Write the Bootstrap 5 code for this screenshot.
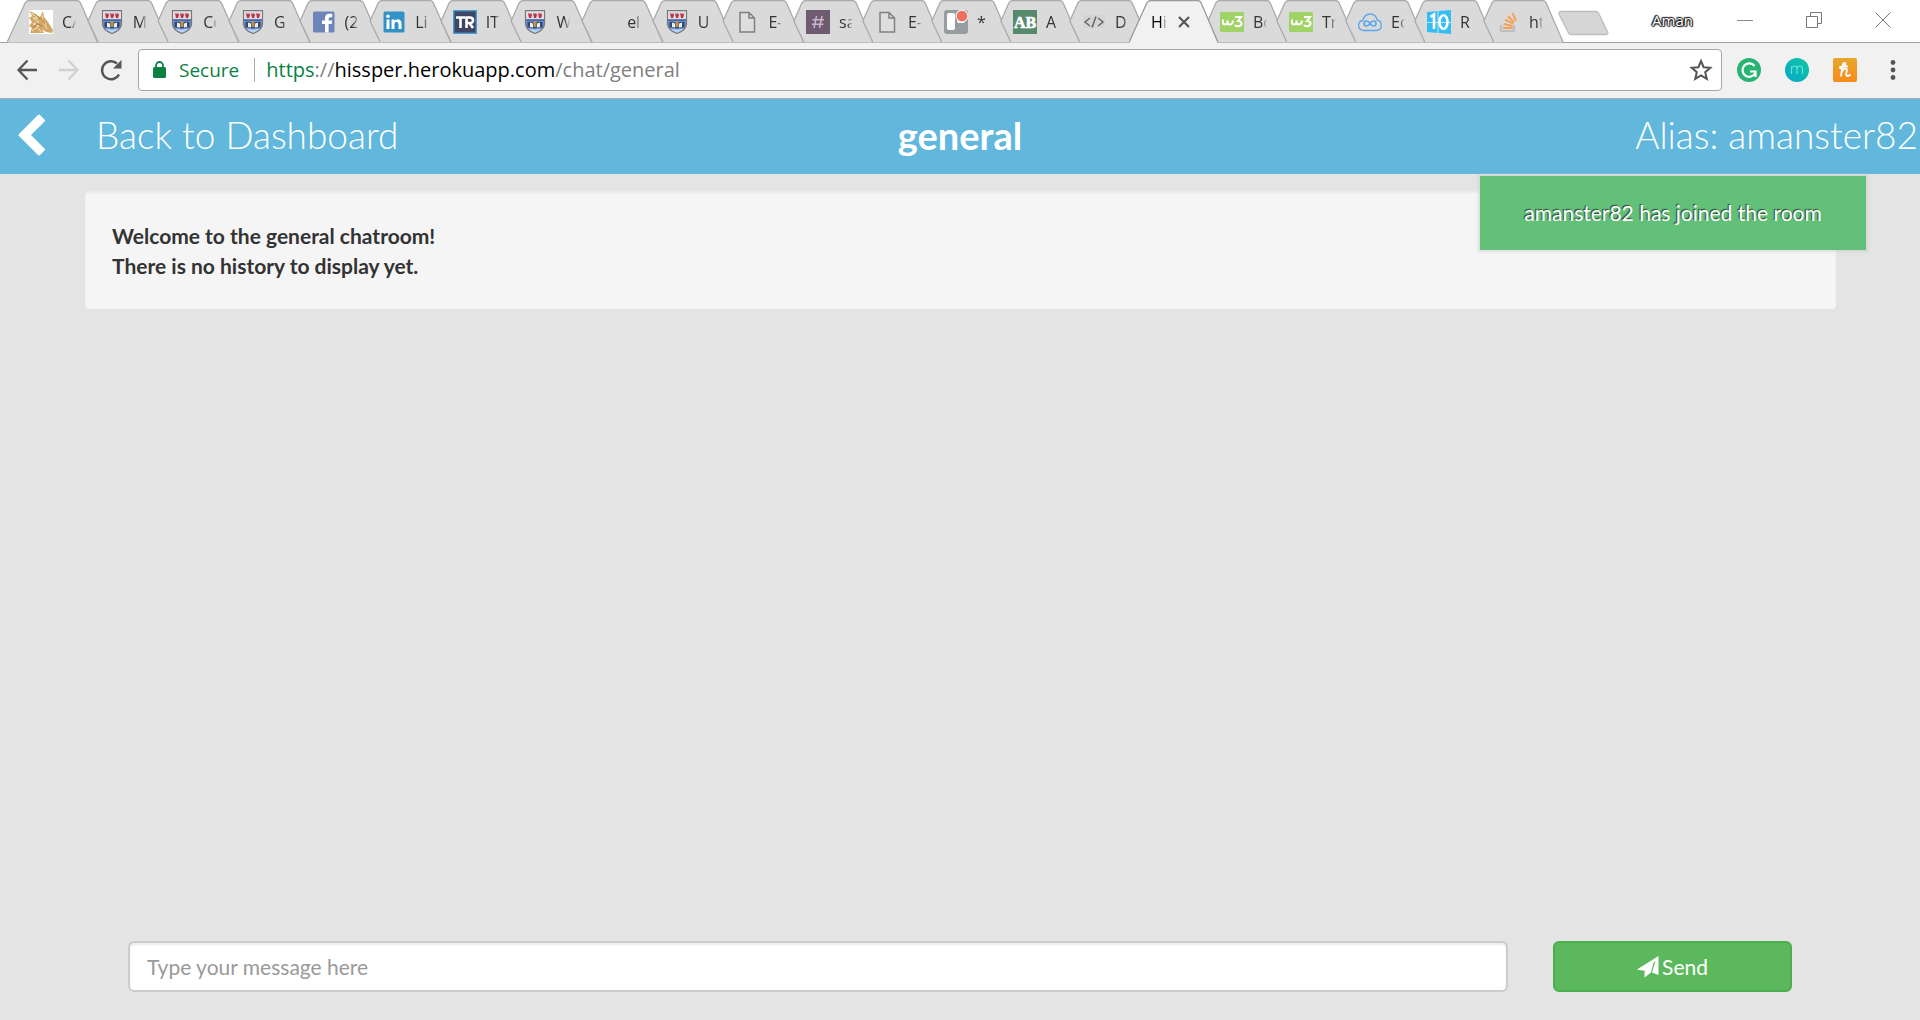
<!DOCTYPE html>
<html lang="en">
<head>
<meta charset="utf-8">
<meta name="viewport" content="width=device-width, initial-scale=1">
<title>Hissper - general</title>
<link rel="stylesheet" href="https://cdn.jsdelivr.net/npm/bootstrap@5.3.0/dist/css/bootstrap.min.css">
<style>
body{background:#e4e4e4;font-family:Lato,sans-serif;font-size:21px;line-height:30px;color:#333}
.chrome-ui{font-family:"Open Sans","Noto Sans",sans-serif}
.tabstrip{height:43px;background:#fff;border-bottom:1px solid #a0a0a0;padding-left:17px}
.tabs-a{width:777px}
.tabs-b{width:759px}
.btab{flex:1 1 0;min-width:0;height:43px;position:relative;color:#333;font-size:16px;line-height:24px;padding:10px 0 9px 12px;text-decoration:none}
.btab .tabshape{position:absolute;left:-10px;top:0;width:calc(100% + 21px);height:43px}
.btab .fav{position:relative;width:24px;height:24px;flex:none}
.tabtext{position:relative;width:14px;margin-left:9px;overflow:hidden;white-space:nowrap;-webkit-mask-image:linear-gradient(90deg,#000 60%,transparent);mask-image:linear-gradient(90deg,#000 60%,transparent)}
.btab.current{z-index:1;color:#000}
.current .tabtext{margin-left:0;width:16px}
.tabclose{position:relative;margin-left:10px;width:14px}
.plain{background:none;border:0;padding:0;display:flex;align-items:center;justify-content:center}
.newtab{width:52px;margin:10px 0 7px 5px;align-items:flex-start}
.profile{font-size:15px;line-height:20px;color:#fff;text-shadow:-1px 0 1px #222,1px 0 1px #222,0 -1px 1px #222,0 1px 1px #222,1px 1px 1px #444,-1px -1px 1px #444}
.winbtns{gap:53px}
.winset{padding-right:29px;gap:44px;height:40px}
.toolbar-row{height:56px;background:#f1f1f1;border-bottom:1px solid #aaa;padding:0 15px 1px 16px}
.navbtns{gap:19px;width:122px}
.omni{height:42px;background:#fff;border:1px solid #a6a6a6;border-radius:4px;padding:0 8px 0 14px;font-size:20px;line-height:40px}
.secure{color:#0b8043;margin-left:13px;font-size:19px}
.sep{width:1px;height:24px;background:#aaa;margin:0 11px 0 15px}
.urltext{color:#808080}
.urltext b{font-weight:400;color:#000}
.urltext i{font-style:normal;color:#0b8043}
.exts{gap:24px;margin-left:15px}
.roombar{height:75px;background:#62b7dc;color:#fff;font-size:37px;line-height:72px;font-weight:300}
.roombar a{color:#fff;padding-left:18px;gap:51px}
.roombar h1{font-size:38px;line-height:72px;font-weight:700}
.alias{padding-right:2px}
.stage{padding:17px 84px 0 85px}
.history{background:#f5f5f5;border-radius:4px;padding:30px 28px 28px 27px;font-weight:700;box-shadow:inset 0 2px 2px #0000000d}
.joined{position:absolute;top:2px;right:54px;width:386px;height:74px;background:#63c079;color:#fff;font-size:21px;text-shadow:-1px -1px 1px #222c;box-shadow:0 0 2px 2px #ccc8}
.composer{padding:0 128px 28px;gap:45px}
.composer .form-control{height:51px;border:2px solid #ccc;border-radius:6px;padding:6px 17px;font-size:21px;line-height:30px;box-shadow:inset 0 2px 2px #00000013}
.composer .form-control::placeholder{color:#999}
.btn-send{width:239px;height:51px;background:#5cb85c;border:2px solid #4cae4c;border-radius:6px;color:#fff;font-size:21px;line-height:30px;gap:3px}
.btn-send:hover{background:#449d44;color:#fff}
</style>
<script src="https://cdn.jsdelivr.net/npm/bootstrap@5.3.0/dist/js/bootstrap.bundle.min.js"></script>
</head>
<body class="d-flex flex-column min-vh-100">
<svg width="0" height="0" class="position-absolute" aria-hidden="true">
  <defs>
    <linearGradient id="teal" x1="1" y1="0" x2="0" y2="1"><stop offset="0" stop-color="#0bc9a0"/><stop offset="1" stop-color="#0aa5cc"/></linearGradient>
    <linearGradient id="honey" x1="0" y1="0" x2="0" y2="1"><stop offset="0" stop-color="#e8a62c"/><stop offset="1" stop-color="#f88b1c"/></linearGradient>
  </defs>
  <symbol id="tab" viewBox="0 0 91 43" preserveAspectRatio="none"><path d="M10 21L18 3Q19.500 .5 22 .5H69Q72 .5 73 3L90 42.500H20Z" fill="#dadada"/><path d="M20 42L10 21L18 3Q19.500 .5 22 .5H69Q72 .5 73 3L90 42" fill="none" stroke="#aaa" stroke-width="1.300"/></symbol>
  <symbol id="tab-first" viewBox="0 0 91 43" preserveAspectRatio="none"><path d="M0 42.500L18 3Q19.500 .5 22 .5H69Q72 .5 73 3L90 42.500" fill="#dadada" stroke="#aaa" stroke-width="1.300"/></symbol>
  <symbol id="tab-open" viewBox="0 0 91 43" preserveAspectRatio="none"><path d="M0 42.500L18 3Q19.500 .5 22 .5H69Q72 .5 73 3L90 42.500V43H0Z" fill="#f1f1f1"/><path d="M0 42.500L18 3Q19.500 .5 22 .5H69Q72 .5 73 3L90 42.500" fill="none" stroke="#999" stroke-width="1.300"/></symbol>
  <symbol id="crest" viewBox="0 0 24 24"><path d="M2.500 .7H21.500V14Q21 20.500 12 23.500Q3 20.500 2.500 14Z" fill="#6f8fd0" stroke="#777" stroke-width="1.200"/><path d="M3 1.200H21V9H3Z" fill="#ddd"/><path d="M5 3l2 1 1-1 1 2-1 3H6zM10 3l2 1 1-1 1 2-1 3h-2zM15 3l2 1 1-1 1 2-1 3h-2z" fill="#c03048"/><path d="M3 9.500H21V11H3Z" fill="#4d69a8"/><path d="M4.500 12q4-1 7 1 4-2 8-1v5.500q-4-.5-7.500 1-3.500-1.500-7.500-1z" fill="#34486f"/><path d="M7 12.500l3 1v4l-3-.5zM14 13.500l3-1v4.500l-3 .5z" fill="#eee"/><path d="M10.500 11h3v6h-3z" fill="#b9964f"/><path d="M5 18.500q7 2 14 0-3 3-7 4.300-4-1.300-7-4.300" fill="#b9d5f3"/></symbol>
  <symbol id="page" viewBox="0 0 24 24"><path d="M5 2.500H14L19.500 8V22H5ZM14 2.500V8H19.500" fill="#dedede" stroke="#808080" stroke-width="1.500"/></symbol>
  <symbol id="w3" viewBox="0 0 24 24"><rect y="2" width="24" height="20" rx="1.500" fill="#9fd366"/><path d="M3 9.500v3q0 2 2 2t2.500-2v-2 2q0 2 2.500 2t3-4M15 7h6l-3 4q3.500 0 3.500 2.500T18 16.300q-2.500 0-3-1.500" fill="none" stroke="#fff" stroke-width="2"/></symbol>
</svg>

<header class="chrome-ui">
  <nav class="tabstrip d-flex" aria-label="Open tabs">
    <div class="tabs-a d-flex">
      <a href="#" class="btab d-flex"><svg class="tabshape"><use href="#tab-first"/></svg><svg class="fav" viewBox="0 0 24 24"><path fill="#fff" d="M0 0h24v24H0z"/><path d="M0 1l5 2 6 4 3-6 1 6 4 5 5 8-1 3-6-1-4-3 2 4H1l2-5-3-2 3-4-3-4 3-2z" fill="#d3a766"/><path d="M2 3l7 5H4l6 4-6 2 6 2-7 5M13 5l1 6 4 8M9 18l3 4M15 12l2 2" fill="none" stroke="#f3dfbf" stroke-width="1"/><path d="M6 4l5 5M7 13l6 3M4 18l4-4M12 8l4 6" stroke="#a87835" stroke-width=".9"/></svg><span class="tabtext">CA</span></a>
      <a href="#" class="btab d-flex"><svg class="tabshape"><use href="#tab"/></svg><svg class="fav"><use href="#crest"/></svg><span class="tabtext">M</span></a>
      <a href="#" class="btab d-flex"><svg class="tabshape"><use href="#tab"/></svg><svg class="fav"><use href="#crest"/></svg><span class="tabtext">Co</span></a>
      <a href="#" class="btab d-flex"><svg class="tabshape"><use href="#tab"/></svg><svg class="fav"><use href="#crest"/></svg><span class="tabtext">G</span></a>
      <a href="#" class="btab d-flex"><svg class="tabshape"><use href="#tab"/></svg><svg class="fav" viewBox="0 0 24 24"><rect x="1" y="1.500" width="21.500" height="21" rx="1.500" fill="#6d84b8"/><path d="M13 22.500V14h-3v-3.500h3V8q0-4.300 4.500-4.300h2.800v3.500h-2q-1.700 0-1.700 1.600v1.700h3.600L19.700 14h-3.100v8.500z" fill="#fff"/></svg><span class="tabtext">(2</span></a>
      <a href="#" class="btab d-flex"><svg class="tabshape"><use href="#tab"/></svg><svg class="fav" viewBox="0 0 24 24"><rect x="1.500" y="1.500" width="21" height="21" rx="1.500" fill="#3292c8"/><path d="M4.500 9.500h3V19h-3zM9.500 9.500h3v1.300q1-1.500 3-1.500 4 0 4 4.500V19h-3v-4.500q0-2.700-2-2.700t-2 2.700V19h-3z" fill="#fff"/><circle cx="6" cy="6.200" r="1.800" fill="#fff"/></svg><span class="tabtext">Li</span></a>
      <a href="#" class="btab d-flex"><svg class="tabshape"><use href="#tab"/></svg><svg class="fav" viewBox="0 0 24 24"><rect x=".7" y=".7" width="22.600" height="22.600" fill="#3d4664" stroke="#4a9bd0" stroke-width="1.400"/><path d="M3 7.500h9M7.500 7v11M13.500 18V7.500h3.500q3 0 3 2.800T17 13h-3M16.500 13l3.500 5" fill="none" stroke="#fff" stroke-width="2.600"/></svg><span class="tabtext">IT</span></a>
      <a href="#" class="btab d-flex"><svg class="tabshape"><use href="#tab"/></svg><svg class="fav"><use href="#crest"/></svg><span class="tabtext">W</span></a>
      <a href="#" class="btab d-flex"><svg class="tabshape"><use href="#tab"/></svg><svg class="fav"></svg><span class="tabtext">el</span></a>
      <a href="#" class="btab d-flex"><svg class="tabshape"><use href="#tab"/></svg><svg class="fav"><use href="#crest"/></svg><span class="tabtext">U</span></a>
      <a href="#" class="btab d-flex"><svg class="tabshape"><use href="#tab"/></svg><svg class="fav"><use href="#page"/></svg><span class="tabtext">E-</span></a>
    </div>
    <div class="tabs-b d-flex">
      <a href="#" class="btab d-flex"><svg class="tabshape"><use href="#tab"/></svg><svg class="fav" viewBox="0 0 24 24"><path fill="#6f5b70" d="M0 0h24v24H0z"/><path d="M10.500 6L8 18M16 6l-2.500 12M6.500 9.700h11.500M6 14.300h11.500" stroke="#c9b6ca" stroke-width="1.500"/></svg><span class="tabtext">sa</span></a>
      <a href="#" class="btab d-flex"><svg class="tabshape"><use href="#tab"/></svg><svg class="fav"><use href="#page"/></svg><span class="tabtext">E-</span></a>
      <a href="#" class="btab d-flex"><svg class="tabshape"><use href="#tab"/></svg><svg class="fav overflow-visible" viewBox="0 0 24 24"><rect width="24" height="24" rx="3" fill="#959da1"/><rect x="3" y="3" width="8" height="17" rx="2" fill="#fff"/><rect x="13" y="3" width="8" height="10" rx="2" fill="#fff"/><circle cx="18" cy="6" r="6.500" fill="#f1f1f1"/><circle cx="18" cy="6" r="5.300" fill="#f0705f"/></svg><span class="tabtext">*</span></a>
      <a href="#" class="btab d-flex"><svg class="tabshape"><use href="#tab"/></svg><svg class="fav" viewBox="0 0 24 24"><path fill="#568a6d" d="M0 0h24v24H0z"/><text x="12" y="18" text-anchor="middle" font-family="Liberation Serif,serif" font-weight="700" font-size="16" fill="#fff" stroke="#fff" stroke-width=".6">AB</text></svg><span class="tabtext">A</span></a>
      <a href="#" class="btab d-flex"><svg class="tabshape"><use href="#tab"/></svg><svg class="fav" viewBox="0 0 24 24"><path fill="#d4d4d4" d="M1 5h22v13H1z"/><path d="M8 8l-5 4 5 4M16 8l5 4-5 4M14 6.500L10 17.500" fill="none" stroke="#666" stroke-width="1.500"/></svg><span class="tabtext">D</span></a>
      <a href="#" class="btab current d-flex" aria-current="page"><svg class="tabshape"><use href="#tab-open"/></svg><span class="tabtext">Hi</span><svg class="tabclose" viewBox="0 0 14 24"><path d="M2 7L12 17M12 7L2 17" stroke="#555" stroke-width="2.200"/></svg></a>
      <a href="#" class="btab d-flex"><svg class="tabshape"><use href="#tab"/></svg><svg class="fav"><use href="#w3"/></svg><span class="tabtext">Bo</span></a>
      <a href="#" class="btab d-flex"><svg class="tabshape"><use href="#tab"/></svg><svg class="fav"><use href="#w3"/></svg><span class="tabtext">Tr</span></a>
      <a href="#" class="btab d-flex"><svg class="tabshape"><use href="#tab"/></svg><svg class="fav" viewBox="0 0 24 24"><path d="M5.500 20.500q-4.800-.5-4.800-5t4-5Q6.500 4 12 4q6 0 7 6 4.300 1 4.300 5.300 0 5.200-5.300 5.200z" fill="none" stroke="#58a6ee" stroke-width="1.300"/><path d="M12 13.500Q10.500 11 8.700 11 6 11 6 13.500T8.700 16Q10.500 16 12 13.500T15.300 11Q18 11 18 13.500T15.300 16Q13.500 16 12 13.500" fill="none" stroke="#58a6ee" stroke-width="1.600"/></svg><span class="tabtext">Ec</span></a>
      <a href="#" class="btab d-flex"><svg class="tabshape"><use href="#tab"/></svg><svg class="fav" viewBox="0 0 24 24"><path fill="#35bdf3" d="M0 2L24 0V24L0 22z"/><path d="M0 12.500H24M11 1V23" stroke="#bce9fa" stroke-width="1"/><path d="M3.500 7L7 4.500V19" fill="none" stroke="#fff" stroke-width="2.600"/><ellipse cx="16.500" cy="12" rx="4" ry="6.800" fill="none" stroke="#fff" stroke-width="2.600"/></svg><span class="tabtext">R</span></a>
      <a href="#" class="btab d-flex"><svg class="tabshape"><use href="#tab"/></svg><svg class="fav" viewBox="0 0 24 24"><path d="M5 15v6h13v-6" fill="none" stroke="#bcbfc2" stroke-width="2.200"/><path d="M7 18h9.500M7.500 14l9 2M9 9.700l8 4M12 6l6 6.500M16.500 3l3.500 8" stroke="#f5a257" stroke-width="2"/></svg><span class="tabtext">ht</span></a>
    </div>
    <button class="plain newtab" aria-label="New tab"><svg width="52" height="26"><path d="M3 1.500H38Q40 1.500 41 4L50 23Q50 24.500 48 24.500H14Q11 24.500 10 22L1 4Q1 1.500 3 1.500Z" fill="#d6d6d6" stroke="#bdbdbd" stroke-width="1.300"/></svg></button>
    <div class="d-flex ms-auto winset align-items-center">
      <button class="plain profile">Aman</button>
      <div class="d-flex winbtns">
        <button class="plain" aria-label="Minimise"><svg width="16" height="16"><path d="M0 8.500H16" stroke="#888"/></svg></button>
        <button class="plain" aria-label="Restore"><svg width="16" height="16"><path d="M.5 4.500H11.500V15.500H.5ZM4.500 4V.5H15.500V11.500H12" fill="none" stroke="#777"/></svg></button>
        <button class="plain" aria-label="Close window"><svg width="16" height="16"><path d="M.5 .5L15.500 15.500M15.500 .5L.5 15.500" stroke="#777"/></svg></button>
      </div>
    </div>
  </nav>
  <div class="toolbar-row d-flex align-items-center">
    <div class="navbtns d-flex">
      <button class="plain" aria-label="Back"><svg width="22" height="24"><path d="M21 12H3M11.500 2.500L2.500 12L11.500 21.500" fill="none" stroke="#555" stroke-width="2.300"/></svg></button>
      <button class="plain" aria-label="Forward"><svg width="22" height="24"><path d="M2 12H20M11.500 2.500L20.500 12L11.500 21.500" fill="none" stroke="#d0d0d0" stroke-width="2.300"/></svg></button>
      <button class="plain" aria-label="Reload"><svg width="24" height="24"><path d="M21 16.500A9 9 0 1 1 19 5.500" fill="none" stroke="#555" stroke-width="2.400"/><path d="M23.500 2V10.500H15Z" fill="#555"/></svg></button>
    </div>
    <div class="omni d-flex align-items-center flex-grow-1" role="group" aria-label="Address">
      <svg width="13" height="18"><rect y="6" width="13" height="11" rx="1.500" fill="#0b8043"/><path d="M3 7V4.500a3.500 3.500 0 0 1 7 0V7" fill="none" stroke="#0b8043" stroke-width="1.800"/></svg>
      <span class="secure">Secure</span><span class="sep"></span>
      <span class="urltext"><i>https</i>://<b>hissper.herokuapp.com</b>/chat/general</span>
      <button class="plain ms-auto" aria-label="Bookmark this page"><svg width="24" height="24" viewBox="0 0 24 24"><path d="M12 3L14.600 9.200L21.300 9.800L16.200 14.200L17.800 20.800L12 17.300L6.200 20.800L7.800 14.200L2.700 9.800L9.400 9.200Z" fill="none" stroke="#555" stroke-width="2"/></svg></button>
    </div>
    <div class="exts d-flex align-items-center">
      <button class="plain" aria-label="Grammar checker"><svg width="24" height="24"><circle cx="12" cy="12" r="12" fill="#27b473"/><path d="M17.500 8A6.700 6.700 0 1 0 18 15.500M13 13.500H18.500V19" fill="none" stroke="#fff" stroke-width="2.200"/></svg></button>
      <button class="plain" aria-label="Extension m"><svg width="24" height="24"><circle cx="12" cy="12" r="12" fill="url(#teal)"/><path d="M6.500 16V8M6.500 11q0-3 2.800-3T12 11v5M12 11q0-3 2.800-3t2.700 3v5" fill="none" stroke="#64e0dc" stroke-width="1.200"/></svg></button>
      <button class="plain" aria-label="Coupons"><svg width="24" height="24"><rect width="24" height="24" rx="2" fill="url(#honey)"/><path d="M6 9.500Q12 8.500 12.500 6 12.500 4.500 11 5 9.500 6 9 10L8 18.500M8.800 14Q11 10 13 10.500 14.500 11 13.500 14 12.500 18 14.500 18 16 18 17.500 16.500M6.500 10.200Q10 8 15 8.500" fill="none" stroke="#fff" stroke-width="1.800"/></svg></button>
      <button class="plain" aria-label="Browser menu"><svg width="24" height="24"><g fill="#555"><circle cx="12" cy="4.500" r="2.400"/><circle cx="12" cy="12" r="2.400"/><circle cx="12" cy="19.500" r="2.400"/></g></svg></button>
    </div>
  </div>
</header>

<nav class="roombar row g-0">
  <div class="col-4"><a href="#" class="d-flex align-items-center text-decoration-none"><svg width="27" height="42"><path d="M20 1Q21 0 22 1L26.500 5.500Q27.500 6.500 26.500 7.500L13 21L26.500 34.500Q27.500 35.500 26.500 36.500L22 41Q21 42 20 41L1 22Q0 21 1 20Z" fill="#fff"/></svg><span>Back to Dashboard</span></a></div>
  <h1 class="col-4 text-center m-0">general</h1>
  <div class="col-4 text-end alias">Alias: amanster82</div>
</nav>

<main class="d-flex flex-column flex-grow-1 position-relative">
  <section class="stage flex-grow-1">
    <div class="history">Welcome to the general chatroom!<br>There is no history to display yet.</div>
  </section>
  <div class="joined d-flex align-items-center justify-content-center" role="status">amanster82 has joined the room</div>
  <form class="composer d-flex">
    <label class="visually-hidden" for="message">Message</label>
    <input id="message" type="text" class="form-control" placeholder="Type your message here">
    <button type="button" class="btn btn-send d-flex align-items-center justify-content-center flex-shrink-0 p-0"><svg width="22" height="22" viewBox="0 0 22 22"><path d="M21.500 0V19L15 16.500L18.500 5L8.500 15L0 13.500ZM14 16.500L7.500 21.500L7.500 16L16.500 7Z" fill="#fff"/></svg>Send</button>
  </form>
</main>
</body>
</html>
